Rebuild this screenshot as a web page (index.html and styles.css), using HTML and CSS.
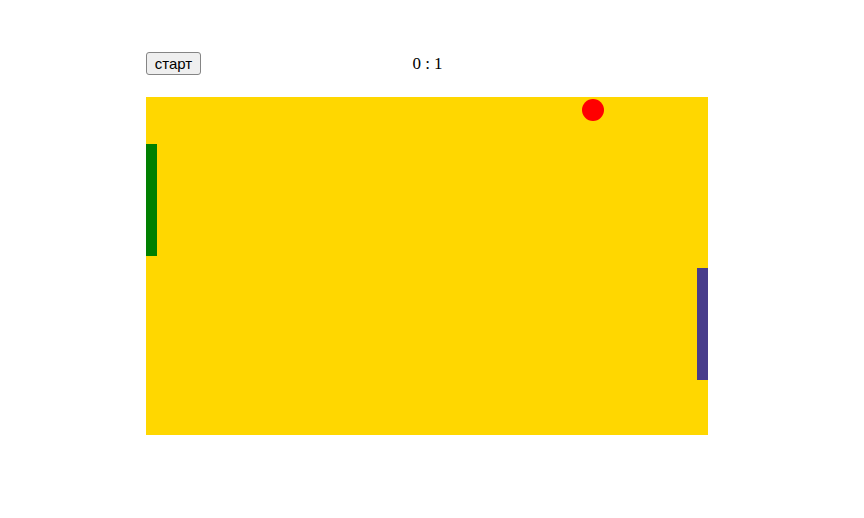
FILE: index.html
```html
<!DOCTYPE html>
<html lang="ru">
<head>
<meta charset="utf-8">
<title>Pong</title>
<link rel="stylesheet" href="styles.css">
</head>
<body>
<div class="game">
  <div class="bar">
    <button class="start" type="button">старт</button>
    <div class="score">0 : 1</div>
    <div></div>
  </div>
  <div class="field">
    <div class="paddle paddle-left"></div>
    <div class="paddle paddle-right"></div>
    <div class="ball"></div>
  </div>
</div>
</body>
</html>
```

FILE: styles.css
```css
html, body {
  margin: 0;
  padding: 0;
  background: #ffffff;
}

body {
  font-family: "Liberation Serif", "Times New Roman", serif;
  font-size: 16px;
  color: #000000;
}

.game {
  width: 562px;
  margin-left: 146px;
  padding-top: 52px;
}

.bar {
  display: grid;
  grid-template-columns: 1fr auto 1fr;
  align-items: center;
  height: 23px;
}

.start {
  justify-self: start;
  box-sizing: border-box;
  height: 23px;
  width: 55px;
  padding: 0;
  font-family: "Liberation Sans", Arial, sans-serif;
  font-size: 15px;
  color: #000000;
  background: #efefef;
  border: 1px solid #858585;
  border-radius: 3px;
}

.score {
  font-size: 17px;
  line-height: 19px;
  padding-left: 1px;
}

.field {
  position: relative;
  margin-top: 22px;
  height: 338px;
  background: #ffd700;
}

.paddle {
  position: absolute;
  width: 11px;
  height: 112px;
}

.paddle-left {
  left: 0;
  top: 47px;
  background: #008000;
}

.paddle-right {
  right: 0;
  top: 171px;
  background: #483d8b;
}

.ball {
  position: absolute;
  left: 436px;
  top: 2px;
  width: 22px;
  height: 22px;
  border-radius: 50%;
  background: #ff0000;
}
```
